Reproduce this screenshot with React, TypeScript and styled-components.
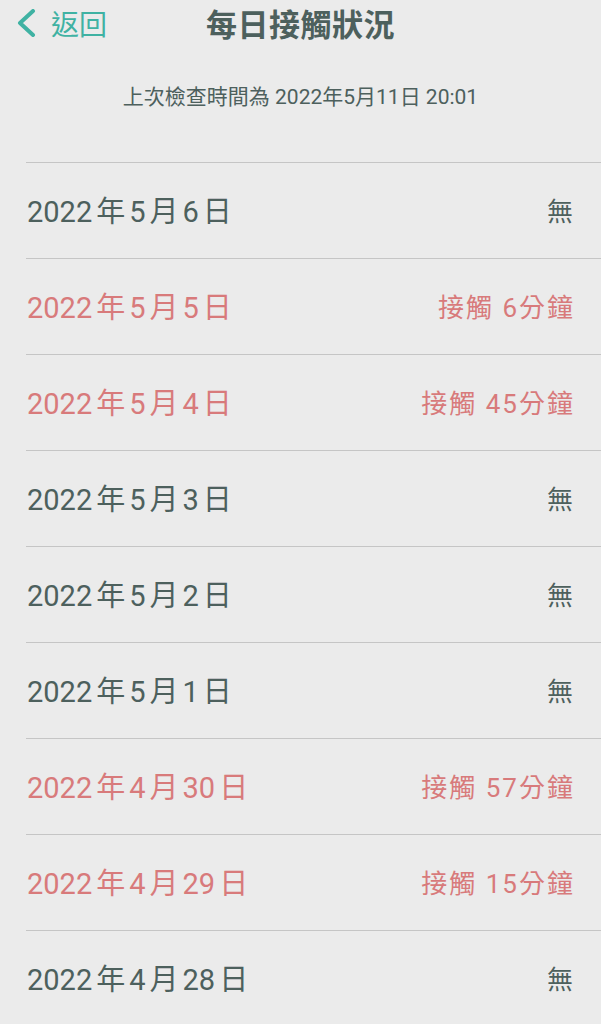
import styled, { createGlobalStyle } from "styled-components";

const GlobalStyle = createGlobalStyle`
  body {
    margin: 0;
    background: #ebebeb;
  }
`;

const DARK = "#4d605d";
const ALERT = "#d87a7b";
const TEAL = "#3fb2a3";

const Page = styled.div`
  min-height: 100vh;
  background: #ebebeb;
  font-family: Roboto, "Noto Sans CJK TC", sans-serif;
  color: ${DARK};
  overflow: hidden;
`;

const NavBar = styled.div`
  display: grid;
  grid-template-columns: 1fr auto 1fr;
  align-items: center;
  height: 44px;
`;

const BackButton = styled.div`
  display: flex;
  align-items: center;
  gap: 14px;
  padding-left: 15px;
  color: ${TEAL};
  font-size: 28px;
  font-family: "Noto Sans CJK TC", sans-serif;
`;

const Title = styled.h1`
  margin: 0;
  font-size: 31px;
  font-weight: 700;
  font-family: "Noto Sans CJK TC", sans-serif;
  color: ${DARK};
  letter-spacing: 0.5px;
`;

const CheckedAt = styled.p`
  margin: 39px 0 0;
  text-align: center;
  font-size: 21px;
  line-height: 28px;
  color: ${DARK};
`;

const List = styled.div`
  margin: 51px 0 0 26px;
`;

const Row = styled.div`
  display: flex;
  justify-content: space-between;
  align-items: center;
  height: 96px;
  padding: 0 26px 3px 1px;
  box-sizing: border-box;
  border-top: 1px solid #c5c5c5;
`;

const DateLabel = styled.span<{ $alert: boolean }>`
  font-size: 29px;
  color: ${(p) => (p.$alert ? ALERT : DARK)};
`;

const Unit = styled.span`
  margin: 0 4px;
`;

const Status = styled.span<{ $alert: boolean }>`
  font-size: 26px;
  letter-spacing: 2px;
  color: ${(p) => (p.$alert ? ALERT : DARK)};
`;

const days = [
  { m: 5, d: 6, min: 0 },
  { m: 5, d: 5, min: 6 },
  { m: 5, d: 4, min: 45 },
  { m: 5, d: 3, min: 0 },
  { m: 5, d: 2, min: 0 },
  { m: 5, d: 1, min: 0 },
  { m: 4, d: 30, min: 57 },
  { m: 4, d: 29, min: 15 },
  { m: 4, d: 28, min: 0 },
];

export default function App() {
  return (
    <Page>
      <GlobalStyle />
      <NavBar>
        <BackButton>
          <svg width="22" height="28" viewBox="0 0 22 28">
            <polyline
              points="18,2 5,14 18,26"
              fill="none"
              stroke={TEAL}
              strokeWidth="4"
              strokeLinecap="round"
              strokeLinejoin="round"
            />
          </svg>
          返回
        </BackButton>
        <Title>每日接觸狀況</Title>
        <div />
      </NavBar>
      <CheckedAt>上次檢查時間為 2022年5月11日 20:01</CheckedAt>
      <List>
        {days.map((x) => {
          const alert = x.min > 0;
          return (
            <Row key={`${x.m}-${x.d}`}>
              <DateLabel $alert={alert}>
                2022<Unit>年</Unit>
                {x.m}
                <Unit>月</Unit>
                {x.d}
                <Unit>日</Unit>
              </DateLabel>
              <Status $alert={alert}>
                {alert ? `接觸 ${x.min}分鐘` : "無"}
              </Status>
            </Row>
          );
        })}
      </List>
    </Page>
  );
}
